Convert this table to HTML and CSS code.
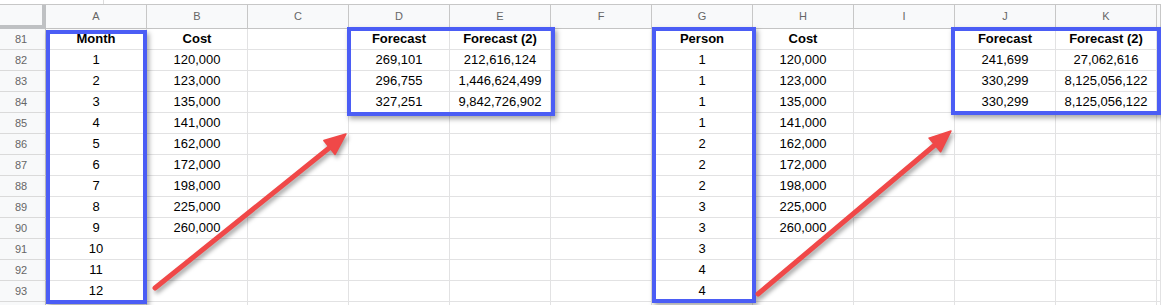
FILE: index.html
```html
<!DOCTYPE html>
<html>
<head>
<meta charset="utf-8">
<link rel="stylesheet" href="styles.css">
</head>
<body>
<div class="sheet">
  <div class="topbar"><span class="frag"></span></div>
  <div class="grid">
    <div class="corner"></div>
    <div class="ch">A</div><div class="ch">B</div><div class="ch">C</div><div class="ch">D</div><div class="ch">E</div><div class="ch">F</div><div class="ch">G</div><div class="ch">H</div><div class="ch">I</div><div class="ch">J</div><div class="ch">K</div><div class="ch"></div>

    <div class="rh">81</div><div class="c b">Month</div><div class="c b">Cost</div><div class="c"></div><div class="c b">Forecast</div><div class="c b">Forecast (2)</div><div class="c"></div><div class="c b">Person</div><div class="c b">Cost</div><div class="c"></div><div class="c b">Forecast</div><div class="c b">Forecast (2)</div><div class="c"></div>
    <div class="rh">82</div><div class="c">1</div><div class="c">120,000</div><div class="c"></div><div class="c">269,101</div><div class="c">212,616,124</div><div class="c"></div><div class="c">1</div><div class="c">120,000</div><div class="c"></div><div class="c">241,699</div><div class="c">27,062,616</div><div class="c"></div>
    <div class="rh">83</div><div class="c">2</div><div class="c">123,000</div><div class="c"></div><div class="c">296,755</div><div class="c">1,446,624,499</div><div class="c"></div><div class="c">1</div><div class="c">123,000</div><div class="c"></div><div class="c">330,299</div><div class="c">8,125,056,122</div><div class="c"></div>
    <div class="rh">84</div><div class="c">3</div><div class="c">135,000</div><div class="c"></div><div class="c">327,251</div><div class="c">9,842,726,902</div><div class="c"></div><div class="c">1</div><div class="c">135,000</div><div class="c"></div><div class="c">330,299</div><div class="c">8,125,056,122</div><div class="c"></div>
    <div class="rh">85</div><div class="c">4</div><div class="c">141,000</div><div class="c"></div><div class="c"></div><div class="c"></div><div class="c"></div><div class="c">1</div><div class="c">141,000</div><div class="c"></div><div class="c"></div><div class="c"></div><div class="c"></div>
    <div class="rh">86</div><div class="c">5</div><div class="c">162,000</div><div class="c"></div><div class="c"></div><div class="c"></div><div class="c"></div><div class="c">2</div><div class="c">162,000</div><div class="c"></div><div class="c"></div><div class="c"></div><div class="c"></div>
    <div class="rh">87</div><div class="c">6</div><div class="c">172,000</div><div class="c"></div><div class="c"></div><div class="c"></div><div class="c"></div><div class="c">2</div><div class="c">172,000</div><div class="c"></div><div class="c"></div><div class="c"></div><div class="c"></div>
    <div class="rh">88</div><div class="c">7</div><div class="c">198,000</div><div class="c"></div><div class="c"></div><div class="c"></div><div class="c"></div><div class="c">2</div><div class="c">198,000</div><div class="c"></div><div class="c"></div><div class="c"></div><div class="c"></div>
    <div class="rh">89</div><div class="c">8</div><div class="c">225,000</div><div class="c"></div><div class="c"></div><div class="c"></div><div class="c"></div><div class="c">3</div><div class="c">225,000</div><div class="c"></div><div class="c"></div><div class="c"></div><div class="c"></div>
    <div class="rh">90</div><div class="c">9</div><div class="c">260,000</div><div class="c"></div><div class="c"></div><div class="c"></div><div class="c"></div><div class="c">3</div><div class="c">260,000</div><div class="c"></div><div class="c"></div><div class="c"></div><div class="c"></div>
    <div class="rh">91</div><div class="c">10</div><div class="c"></div><div class="c"></div><div class="c"></div><div class="c"></div><div class="c"></div><div class="c">3</div><div class="c"></div><div class="c"></div><div class="c"></div><div class="c"></div><div class="c"></div>
    <div class="rh">92</div><div class="c">11</div><div class="c"></div><div class="c"></div><div class="c"></div><div class="c"></div><div class="c"></div><div class="c">4</div><div class="c"></div><div class="c"></div><div class="c"></div><div class="c"></div><div class="c"></div>
    <div class="rh">93</div><div class="c">12</div><div class="c"></div><div class="c"></div><div class="c"></div><div class="c"></div><div class="c"></div><div class="c">4</div><div class="c"></div><div class="c"></div><div class="c"></div><div class="c"></div><div class="c"></div>
    <div class="rh"></div><div class="c"></div><div class="c"></div><div class="c"></div><div class="c"></div><div class="c"></div><div class="c"></div><div class="c"></div><div class="c"></div><div class="c"></div><div class="c"></div><div class="c"></div><div class="c"></div>
  </div>

  <div class="hl hl-month"></div>
  <div class="hl hl-fc1"></div>
  <div class="hl hl-person"></div>
  <div class="hl hl-fc2"></div>

  <svg class="arrows" width="1161" height="305" viewBox="0 0 1161 305">
    <g class="arrow">
      <line x1="155" y1="288" x2="331" y2="146.5" />
      <polygon points="346,134 335.1,154.5 323.8,140.5" />
    </g>
    <g class="arrow">
      <line x1="758" y1="294" x2="936" y2="144" />
      <polygon points="951,131 940.6,151.8 929,138.1" />
    </g>
  </svg>
</div>
</body>
</html>
```

FILE: styles.css
```css
html, body {
  margin: 0;
  padding: 0;
  background: #ffffff;
}

body {
  width: 1161px;
  height: 305px;
  overflow: hidden;
  font-family: "Liberation Sans", Arial, sans-serif;
}

.sheet {
  position: relative;
  width: 1161px;
  height: 305px;
  overflow: hidden;
}

.topbar {
  height: 4px;
  border-bottom: 1px solid #c7c7c7;
  position: relative;
  display: flex;
}

.frag {
  margin-left: 103px;
  width: 1px;
  height: 4px;
  background: #dcdcdc;
}

.grid {
  display: grid;
  grid-template-columns: 46px repeat(11, 101px) 1fr;
  grid-template-rows: 24px repeat(13, 21px) 21px;
}

.grid > div {
  box-sizing: border-box;
}

.corner {
  background: #f8f9fa;
  border-right: 4px solid #bfc1c3;
  border-bottom: 4px solid #bfc1c3;
}

.ch {
  background: #f8f9fa;
  border-right: 1px solid #c7c7c7;
  border-bottom: 1px solid #c4c4c4;
  color: #666666;
  font-size: 11px;
  line-height: 23px;
  text-align: center;
}

.rh {
  background: #f8f9fa;
  border-right: 1px solid #c4c4c4;
  border-bottom: 1px solid #dadada;
  color: #666666;
  font-size: 11px;
  line-height: 20px;
  text-align: center;
  padding-right: 3px;
}

.c {
  border-right: 1px solid #e2e2e3;
  border-bottom: 1px solid #e2e2e3;
  font-size: 13px;
  line-height: 20px;
  text-align: center;
  color: #000000;
  white-space: nowrap;
  overflow: hidden;
}

.b {
  font-weight: bold;
}

.hl {
  position: absolute;
  box-sizing: border-box;
  border: 4px solid #4b5df5;
  box-shadow: 2px 3px 5px rgba(0, 0, 0, 0.35);
}

.hl-month {
  left: 46px;
  top: 30px;
  width: 101px;
  height: 274px;
}

.hl-fc1 {
  left: 347px;
  top: 27px;
  width: 208px;
  height: 89px;
}

.hl-person {
  left: 652px;
  top: 27px;
  width: 104px;
  height: 276px;
}

.hl-fc2 {
  left: 951px;
  top: 27px;
  width: 210px;
  height: 88px;
}

.arrows {
  position: absolute;
  left: 0;
  top: 0;
  pointer-events: none;
}

.arrow {
  filter: drop-shadow(2px 3px 2px rgba(0, 0, 0, 0.35));
}

.arrow line {
  stroke: #f04848;
  stroke-width: 5;
  stroke-linecap: round;
}

.arrow polygon {
  fill: #f04848;
  stroke: #f04848;
  stroke-width: 1.5;
  stroke-linejoin: round;
}
```
